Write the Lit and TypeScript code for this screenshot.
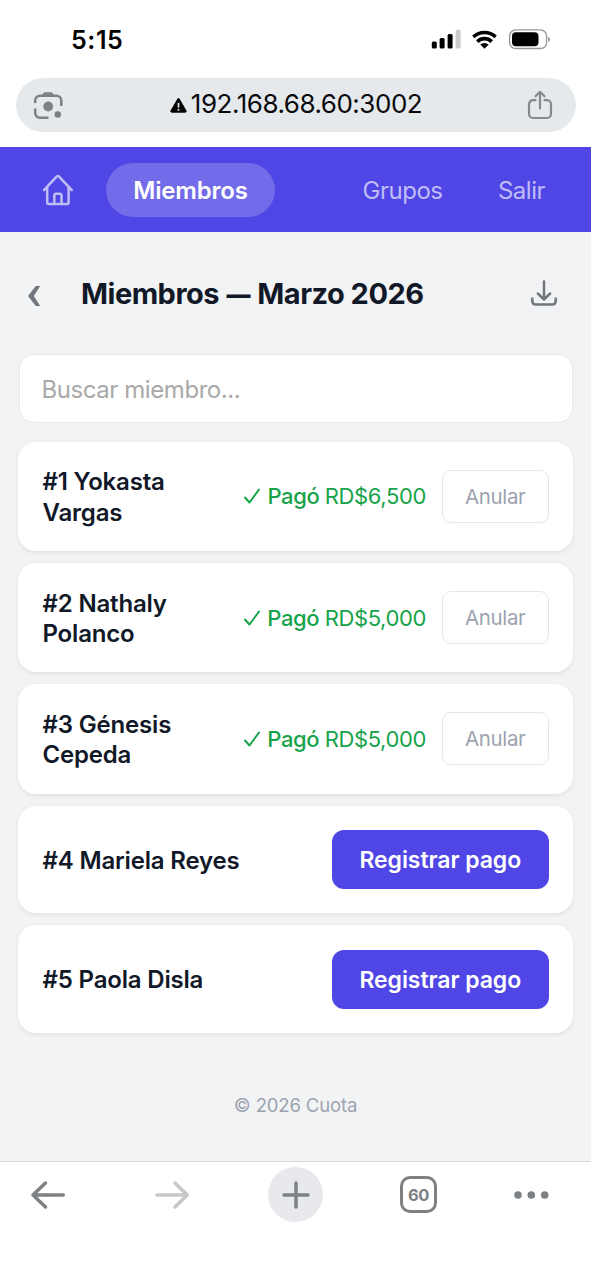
import { LitElement, html, css } from "lit";
import { customElement, property } from "lit/decorators.js";

interface Member {
  num: number;
  name: string;
  paid?: string;
}

const members: Member[] = [
  { num: 1, name: "Yokasta Vargas", paid: "RD$6,500" },
  { num: 2, name: "Nathaly Polanco", paid: "RD$5,000" },
  { num: 3, name: "Génesis Cepeda", paid: "RD$5,000" },
  { num: 4, name: "Mariela Reyes" },
  { num: 5, name: "Paola Disla" },
];

@customElement("status-bar")
export class StatusBar extends LitElement {
  static styles = css`
    :host { display: flex; height: 78px; box-sizing: border-box; padding: 2px 40px 0 71px; align-items: center; justify-content: space-between; }
    .time { font-size: 25px; font-weight: 600; letter-spacing: 0.6px; color: #000; }
    svg { display: block; margin-top: 2px; }
  `;
  render() {
    return html`
      <span class="time">5:15</span>
      <svg width="120" height="24" viewBox="0 0 120 24">
        <rect x="0.8" y="12.500" width="5" height="7" rx="1.5" />
        <rect x="8.6" y="9" width="5" height="10.5" rx="1.5" />
        <rect x="16.6" y="4.900" width="5" height="14.6" rx="1.5" />
        <rect x="24.6" y=".800" width="5" height="18.7" rx="1.5" fill="#ccc" />
        <path d="M41.200 6.600a18 18 0 0 1 24.600 0l-2.300 2.700a14.400 14.400 0 0 0-20 0z" />
        <path d="M45 11.200a12.300 12.300 0 0 1 17 0l-2.600 2.700a8.600 8.600 0 0 0-11.800 0z" />
        <path d="M49.300 15.600a6.200 6.200 0 0 1 8.400 0l-4.200 4.100z" />
        <rect x="78.600" y=".900" width="37" height="18.600" rx="6" fill="none" stroke="#999" stroke-width="1.400" />
        <rect x="81" y="3.200" width="26.500" height="14" rx="4" />
        <path d="M117.200 7.700c2.400.7 2.400 4.600 0 5.300z" fill="#999" />
      </svg>
    `;
  }
}

@customElement("address-bar")
export class AddressBar extends LitElement {
  static styles = css`
    :host { display: block; padding: 0 15.500px; height: 69px; box-sizing: border-box; }
    .pill { height: 53.500px; border-radius: 27px; background: #e6e9ec; display: grid; grid-template-columns: 65px 1fr 65px; align-items: center; }
    .icon { display: block; justify-self: center; }
    .share { margin-right: 6px; }
    .host { display: flex; align-items: center; justify-content: center; gap: 4px; padding-left: 1px; font-size: 26px; color: #0a0a0c; letter-spacing: -0.480px; white-space: nowrap; }
    .host svg { display: block; margin-top: 1px; }
    .host span { margin-top: -2px; }
  `;
  render() {
    return html`
      <div class="pill">
        <svg class="icon" width="30" height="30" viewBox="0 0 30 30" fill="none" stroke="#7d8184" stroke-width="2.5">
          <path d="M2.200 13V10.500a4.800 4.800 0 0 1 4.800-4.800H23.500a4.800 4.800 0 0 1 4.800 4.800V16" />
          <path d="M2.200 18.500V23a4.800 4.800 0 0 0 4.800 4.800h8.500" />
          <path d="M8.800 6.500l1.500-3.200q.5-1 1.600-1h6.200q1.100 0 1.600 1l1.500 3.200z" fill="#7d8184" stroke="none" />
          <circle cx="15.200" cy="16.500" r="4.900" fill="#7d8184" stroke="none" />
          <circle cx="24.800" cy="24.500" r="3.300" fill="#7d8184" stroke="none" />
        </svg>
        <div class="host">
          <svg width="17" height="15" viewBox="0 0 17 15">
            <path d="M7.200.9q1.300-1.600 2.600 0l6.600 11.500q.7 2.100-1.400 2.300H2q-2.100-.2-1.400-2.300z" fill="#050505" />
            <path d="M8.500 5v4.500" stroke="#e6e9ec" stroke-width="1.700" />
            <circle cx="8.500" cy="11.800" r="1" fill="#e6e9ec" />
          </svg>
          <span>192.168.68.60:3002</span>
        </div>
        <svg class="icon share" width="28" height="32" viewBox="0 0 28 32" fill="none" stroke="#868a8d" stroke-width="2.200" stroke-linecap="round" stroke-linejoin="round">
          <path d="M9.500 11.200H7a4 4 0 0 0-4 4V25a4 4 0 0 0 4 4h14a4 4 0 0 0 4-4v-9.800a4 4 0 0 0-4-4h-2.500" />
          <path d="M14 19.500V3M9.500 7.300L14 2.800l4.500 4.500" />
        </svg>
      </div>
    `;
  }
}

@customElement("app-nav")
export class AppNav extends LitElement {
  static styles = css`
    :host { display: flex; align-items: center; height: 85px; box-sizing: border-box; padding: 0 46px 0 42px; background: #4f46e5; color: #c0bcf6; font-size: 24px; }
    svg { display: block; }
    .tab { margin-left: 32px; height: 54px; width: 169px; box-sizing: border-box; padding-top: 2px; border-radius: 27px; background: #726bea; color: #fff; font-weight: 600; display: flex; align-items: center; justify-content: center; letter-spacing: -0.2px; }
    .links { margin-left: auto; padding-top: 2px; display: flex; gap: 55.500px; letter-spacing: -0.500px; }
  `;
  render() {
    return html`
      <svg width="32" height="32" viewBox="0 0 32 32" fill="none" stroke="#c0bcf6" stroke-width="2.500" stroke-linecap="round" stroke-linejoin="round">
        <path d="M2 16.200L14.800 2.400q1-1 2 0L29.800 16.200" />
        <path d="M5.200 13.500V28.200q0 1.900 1.900 1.900H24.700q1.900 0 1.900-1.900V13.500" />
        <path d="M12.300 30V21.500q0-1.700 1.700-1.700h3.800q1.700 0 1.700 1.700V30" />
      </svg>
      <span class="tab">Miembros</span>
      <div class="links"><span>Grupos</span><span>Salir</span></div>
    `;
  }
}

@customElement("member-card")
export class MemberCard extends LitElement {
  @property({ attribute: false }) member!: Member;

  static styles = css`
    :host { display: flex; align-items: center; height: 107.600px; box-sizing: border-box; padding: 0 24.500px; background: #fff; border-radius: 18px; box-shadow: 0 1.500px 4px rgba(0, 0, 0, 0.07); }
    :host([paid]) { height: 109.300px; }
    .name { width: 210px; padding-top: 3px; font-size: 24px; line-height: 30.500px; font-weight: 600; color: #111827; letter-spacing: -0.180px; }
    .name.short { width: 140px; }
    .status { margin-left: auto; display: flex; align-items: center; color: #16a34a; font-size: 22px; white-space: nowrap; letter-spacing: -0.380px; }
    .status svg { margin-right: 6px; }
    .status b { font-weight: 500; margin-right: 5.500px; }
    button { font-family: inherit; margin: 0; padding: 0; box-sizing: border-box; white-space: nowrap; }
    .undo { width: 106.500px; height: 53px; margin-left: 16px; border: 1.500px solid #e5e7eb; border-radius: 9px; background: #fff; color: #9ca3af; font-size: 20.500px; letter-spacing: -0.350px; }
    .pay { margin-left: auto; width: 216.500px; height: 59px; padding-top: 2px; border: 0; border-radius: 12px; background: #4f46e5; color: #fff; font-size: 23px; font-weight: 600; letter-spacing: -0.070px; }
  `;
  render() {
    const { num, name, paid } = this.member;
    return html`
      <span class="name ${paid ? "short" : ""}">${`#${num} ${name}`}</span>
      ${paid
        ? html`<span class="status">
              <svg width="18" height="18" viewBox="0 0 18 18" fill="none" stroke="#16a34a" stroke-width="2" stroke-linecap="round" stroke-linejoin="round"><path d="M2 10.500L6.500 15.500L16 2.500" /></svg><b>Pagó</b><span>${paid}</span></span>
            <button class="undo">Anular</button>`
        : html`<button class="pay">Registrar pago</button>`}
    `;
  }
}

@customElement("browser-toolbar")
export class BrowserToolbar extends LitElement {
  static styles = css`
    :host { display: flex; align-items: flex-start; height: 119px; box-sizing: border-box; padding: 5px 0 0 28px; border-top: 1px solid #d5d8dc; background: #fff; }
    .slot { height: 55px; display: flex; align-items: center; }
    .forward { margin-left: 83px; }
    .plus { margin-left: 77px; width: 55px; border-radius: 50%; background: #e8e9ed; justify-content: center; }
    .count { margin-left: 77px; }
    .more { margin-left: 76px; }
    .tabs { width: 37px; height: 37px; box-sizing: border-box; border: 3px solid #7d8184; border-radius: 10px; display: flex; align-items: center; justify-content: center; padding-top: 1px; font-size: 16.500px; font-weight: 700; letter-spacing: -0.400px; color: #7d8184; }
    svg { display: block; }
  `;
  render() {
    return html`
      <div class="slot"><svg width="40" height="32" viewBox="0 0 40 32" fill="none" stroke="#7d8184" stroke-width="3.500" stroke-linecap="round" stroke-linejoin="round"><path d="M35.300 16H5M17.500 4L5 16L17.500 28" /></svg></div>
      <div class="slot forward"><svg width="40" height="32" viewBox="0 0 40 32" fill="none" stroke="#c6c7c8" stroke-width="3.500" stroke-linecap="round" stroke-linejoin="round"><path d="M6 16H36.300M24 4L36.300 16L24 28" /></svg></div>
      <div class="slot plus"><svg width="30" height="30" viewBox="0 0 30 30" stroke="#7d8184" stroke-width="3.500" stroke-linecap="round"><path d="M15 3V27M3 15H27" /></svg></div>
      <div class="slot count"><div class="tabs">60</div></div>
      <div class="slot more"><svg width="38" height="10" viewBox="0 0 38 10" fill="#7d8184"><circle cx="5" cy="5" r="3.800" /><circle cx="18.300" cy="5" r="3.800" /><circle cx="31.700" cy="5" r="3.800" /></svg></div>
    `;
  }
}

@customElement("app-root")
export class AppRoot extends LitElement {
  static styles = css`
    :host { display: flex; flex-direction: column; height: 1280px; background: #fff; font-family: Inter, "Liberation Sans", sans-serif; overflow: hidden; }
    main { flex: 1; background: #f2f3f5; padding: 0 18px; display: flex; flex-direction: column; }
    header { height: 122px; flex: none; box-sizing: border-box; display: flex; align-items: center; padding: 0 15px 0 9px; }
    h1 { margin: 0; margin-left: 39px; font-size: 29px; font-weight: 700; color: #111827; letter-spacing: -0.5px; white-space: nowrap; }
    .dash { font-size: 24px; font-weight: 900; margin: 0 1px; vertical-align: 1px; line-height: 1; }
    .save { margin-left: auto; }
    svg { display: block; }
    .back { margin-top: 6px; }
    input { margin: 0 0.500px; height: 69px; flex: none; box-sizing: border-box; border: 1.500px solid #e5e7eb; border-radius: 15px; background: #fff; padding: 2px 22px 0; font-family: inherit; font-size: 24px; letter-spacing: -0.430px; }
    input::placeholder { color: #a9a9a9; opacity: 1; }
    .list { display: flex; flex-direction: column; gap: 12.100px; margin-top: 18.500px; }
    footer { margin-top: 61.200px; text-align: center; font-size: 18.500px; color: #9ca3af; letter-spacing: -0.150px; }
  `;
  render() {
    return html`
      <status-bar></status-bar>
      <address-bar></address-bar>
      <app-nav></app-nav>
      <main>
        <header>
          <svg class="back" width="15" height="22" viewBox="0 0 15 22" fill="#73767e"><path d="M8.800 1H13.200L6.800 11L13.200 21H8.800L1 11z" /></svg>
          <h1>Miembros <span class="dash">—</span> Marzo 2026</h1>
          <svg class="save" width="28" height="28" viewBox="0 0 28 28" fill="none" stroke="#73767e" stroke-width="2.500" stroke-linecap="round" stroke-linejoin="round">
            <path d="M14 2.500V20M7.800 14.500L14 20.500l6.200-6M2.300 19.500V22q0 3.500 3.500 3.500H22.200q3.500 0 3.500-3.500V19.500" />
          </svg>
        </header>
        <input placeholder="Buscar miembro..." />
        <div class="list">
          ${members.map((m) => html`<member-card .member=${m} ?paid=${!!m.paid}></member-card>`)}
        </div>
        <footer>© 2026 Cuota</footer>
      </main>
      <browser-toolbar></browser-toolbar>
    `;
  }
}
